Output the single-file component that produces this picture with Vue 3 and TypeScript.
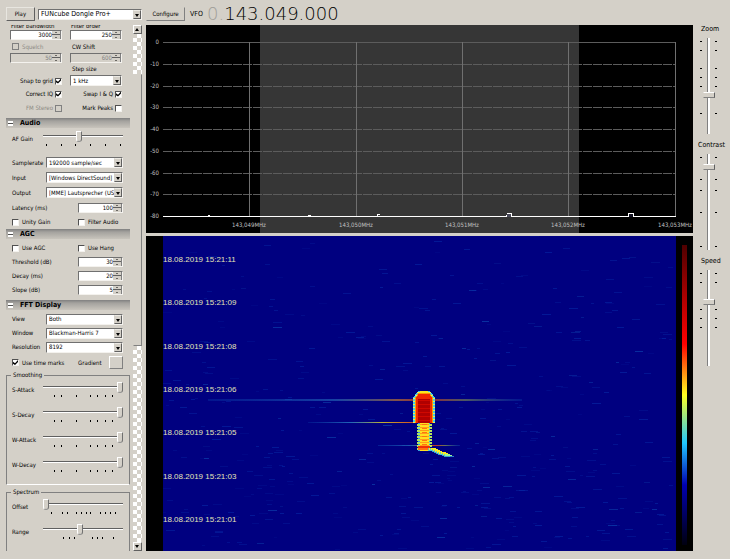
<script setup lang="ts">
import { ref } from 'vue'

interface Slider { id: string; label: string; value: number; ticks: number[] }
interface Choice { id: string; label: string; value: string }
interface Field { id: string; label: string; value: string }
interface Cell { x: number; y: number; w: number; h: number; fill: string; o: number }

const device = ref('FUNcube Dongle Pro+')
const step = ref('1 kHz')

const afGain: Slider = { id: 'af-gain', label: 'AF Gain', value: 45, ticks: [3, 18, 32, 47, 62, 77] }
const audioChoices: Choice[] = [
  { id: 'samplerate', label: 'Samplerate', value: '192000 sample/sec' },
  { id: 'input', label: 'Input', value: '[Windows DirectSound]' },
  { id: 'output', label: 'Output', value: '[MME] Lautsprecher (USB)' },
]
const agcFields: Field[] = [
  { id: 'threshold', label: 'Threshold (dB)', value: '30' },
  { id: 'decay', label: 'Decay (ms)', value: '20' },
  { id: 'slope', label: 'Slope (dB)', value: '5' },
]
const fftChoices: Choice[] = [
  { id: 'view', label: 'View', value: 'Both' },
  { id: 'window', label: 'Window', value: 'Blackman-Harris 7' },
  { id: 'resolution', label: 'Resolution', value: '8192' },
]
const smoothTicks = [11, 18, 33, 47, 54, 62, 69]
const smoothing: Slider[] = [
  { id: 's-attack', label: 'S-Attack', value: 100, ticks: smoothTicks },
  { id: 's-decay', label: 'S-Decay', value: 100, ticks: smoothTicks },
  { id: 'w-attack', label: 'W-Attack', value: 100, ticks: smoothTicks },
  { id: 'w-decay', label: 'W-Decay', value: 100, ticks: smoothTicks },
]
const spectrum: Slider[] = [
  { id: 'offset', label: 'Offset', value: 0, ticks: [8, 19, 24, 33, 38, 43, 47, 57, 62, 67, 72] },
  { id: 'range', label: 'Range', value: 46, ticks: [20, 26, 31, 49, 54, 59, 70] },
]
const bars: Slider[] = [
  { id: 'zoom', label: 'Zoom', value: 40, ticks: [3, 12, 30, 39, 48, 75] },
  { id: 'contrast', label: 'Contrast', value: 89, ticks: [3, 25, 36, 58, 92] },
  { id: 'speed', label: 'Speed', value: 68, ticks: [3, 12, 39, 48, 57] },
]

const levels = [0, -10, -20, -30, -40, -50, -60, -70, -80].map((v, i) => ({ v, y: Math.round(17 + i * 21.75) }))
const freqs = [
  { x: 103, t: '143,049MHz' }, { x: 210, t: '143,050MHz' }, { x: 316, t: '143,051MHz' },
  { x: 422, t: '143,052MHz' }, { x: 529, t: '143,053MHz' },
]
const stamps = ['11', '09', '08', '06', '05', '03', '01'].map((s, i) => ({ t: `18.08.2019 15:21:${s}`, y: Math.round(26 + i * 43.3) }))

let seed = 7
const rnd = (): number => {
  seed = (seed * 16807) % 2147483647
  return seed / 2147483647
}

// Faint background noise of the waterfall, slightly denser towards the bottom
const noise: Cell[] = []
for (let i = 0; i < 480; i++) {
  const w = 3 + Math.floor(rnd() * 7)
  noise.push({
    x: 17 + Math.floor(rnd() * (513 - w)), y: Math.floor(Math.pow(rnd(), 0.7) * 314), w, h: 1,
    fill: rnd() > 0.88 ? '#1468c8' : '#0838b4', o: 0.1 + rnd() * 0.35,
  })
}

// Meteor echo: strong head, striped trunk, fading tail
const echo: Cell[] = []
const put = (x: number, y: number, w: number, fill: string, o = 1, h = 1): void => {
  echo.push({ x, y, w, h, fill, o })
}
for (let y = 155; y < 187; y++) {
  const inset = Math.max(0, Math.floor((162 - y) / 1.4))
  const edge = y % 3 === 0 ? '#f4ff50' : '#48d8f0'
  put(267 + inset, y, 22 - inset * 2, edge, 0.95)
  put(269 + inset, y, 18 - inset * 2, y < 157 ? '#f8e820' : '#ff9800')
  if (y > 157) put(270 + inset, y, 16 - inset * 2, '#f02800')
  if (y > 162) put(272, y, 12, y % 4 === 0 ? '#d00800' : '#b00000')
}
for (let y = 187; y < 215; y++) {
  const k = y % 3
  put(271 + (k === 1 ? 1 : 0), y, k === 1 ? 12 : 15, k === 1 ? '#38b8e8' : '#c8ff58', 0.9)
  put(274, y, 9, k === 2 ? '#ff9c18' : '#ffe020')
  if (y % 4 === 0) put(276, y, 5, '#ff7410')
}
for (let y = 210; y < 214; y++) put(272, y, 12, y < 212 ? '#f03008' : '#ff7410')
for (let i = 0; i < 11; i++) {
  const y = 212 + Math.floor(i * 0.8)
  if (i < 9) put(282 + i * 2, y, 6, '#48c8e0', 0.8, 3)
  put(283 + i * 2, y, 5, i < 8 ? '#fff020' : i < 10 ? '#a0f890' : '#38b0e8', i > 9 ? 0.7 : 1, i < 9 ? 2 : 1)
}
</script>

<template>
  <div class="app">
    <header class="top">
      <button class="push play" type="button">Play</button>
      <span class="pick device">
        <select v-model="device" aria-label="Device"><option>FUNcube Dongle Pro+</option></select>
        <i class="drop"></i>
      </span>
      <button class="push configure" type="button">Configure</button>
      <span class="vfo">VFO</span>
      <span class="freq"><span class="dim">0.</span>143.049.000</span>
    </header>

    <aside class="side">
      <div class="panel">
        <section class="radio">
          <label class="cut" for="bw">Filter bandwidth</label>
          <label class="cut" for="order">Filter order</label>
          <span class="spin"><input id="bw" value="3000"><i class="arrows"></i></span>
          <span class="spin"><input id="order" value="250"><i class="arrows"></i></span>
          <label class="line muted"><input type="checkbox" disabled>Squelch</label>
          <label class="line" for="cw">CW Shift</label>
          <span class="spin off"><input id="sq" value="50" aria-label="Squelch level" disabled><i class="arrows"></i></span>
          <span class="spin off"><input id="cw" value="600" disabled><i class="arrows"></i></span>
          <label class="line stepname" for="step">Step size</label>
          <label class="line end">Snap to grid<input type="checkbox" checked></label>
          <span class="pick">
            <select id="step" v-model="step"><option>1 kHz</option></select>
            <i class="drop"></i>
          </span>
          <label class="line end">Correct IQ<input type="checkbox" checked></label>
          <label class="line end">Swap I &amp; Q<input type="checkbox" checked></label>
          <label class="line end muted">FM Stereo<input type="checkbox" disabled></label>
          <label class="line end">Mark Peaks<input type="checkbox"></label>
        </section>

        <h2><i class="fold"></i>Audio</h2>
        <section class="audio">
          <div class="slide first">
            <label :for="afGain.id">{{ afGain.label }}</label>
            <div class="rail">
              <input :id="afGain.id" type="range" :value="afGain.value">
              <svg viewBox="0 0 80 2"><rect v-for="t in afGain.ticks" :key="t" :x="t" y="0" width="1" height="2" /></svg>
            </div>
          </div>
          <div v-for="c in audioChoices" :key="c.id" class="row">
            <label :for="c.id">{{ c.label }}</label>
            <span class="pick"><select :id="c.id"><option>{{ c.value }}</option></select><i class="drop"></i></span>
          </div>
          <div class="row half">
            <label for="latency">Latency (ms)</label>
            <span class="spin"><input id="latency" value="100"><i class="arrows"></i></span>
          </div>
          <div class="row half">
            <label class="line"><input type="checkbox">Unity Gain</label>
            <label class="line"><input type="checkbox">Filter Audio</label>
          </div>
        </section>

        <h2><i class="fold"></i>AGC</h2>
        <section class="agc">
          <div class="row half">
            <label class="line"><input type="checkbox">Use AGC</label>
            <label class="line"><input type="checkbox">Use Hang</label>
          </div>
          <div v-for="f in agcFields" :key="f.id" class="row half">
            <label :for="f.id">{{ f.label }}</label>
            <span class="spin"><input :id="f.id" :value="f.value"><i class="arrows"></i></span>
          </div>
        </section>

        <h2><i class="fold"></i>FFT Display</h2>
        <section class="fft">
          <div v-for="c in fftChoices" :key="c.id" class="row">
            <label :for="c.id">{{ c.label }}</label>
            <span class="pick"><select :id="c.id"><option>{{ c.value }}</option></select><i class="drop"></i></span>
          </div>
          <div class="row half marks">
            <label class="line"><input type="checkbox" checked>Use time marks</label>
            <span class="grad"><label for="gradient">Gradient</label><button id="gradient" class="push swatch" type="button" aria-label="Gradient"></button></span>
          </div>
        </section>

        <fieldset>
          <legend>Smoothing</legend>
          <div v-for="s in smoothing" :key="s.id" class="slide">
            <label :for="s.id">{{ s.label }}</label>
            <div class="rail">
              <input :id="s.id" type="range" :value="s.value">
              <svg viewBox="0 0 80 2"><rect v-for="t in s.ticks" :key="t" :x="t" y="0" width="1" height="2" /></svg>
            </div>
          </div>
        </fieldset>
        <fieldset class="open">
          <legend>Spectrum</legend>
          <div v-for="s in spectrum" :key="s.id" class="slide">
            <label :for="s.id">{{ s.label }}</label>
            <div class="rail">
              <input :id="s.id" type="range" :value="s.value">
              <svg viewBox="0 0 80 2"><rect v-for="t in s.ticks" :key="t" :x="t" y="0" width="1" height="2" /></svg>
            </div>
          </div>
        </fieldset>
      </div>
      <div class="scroll">
        <i class="nudge up"></i>
        <i class="gap"></i>
        <i class="thumb"></i>
        <i class="gap rest"></i>
        <i class="nudge down"></i>
      </div>
    </aside>

    <main class="views">
      <svg class="plot" viewBox="0 0 547 208" shape-rendering="crispEdges">
        <rect width="547" height="208" fill="#000" />
        <rect x="114" width="319" height="208" fill="#363636" />
        <g stroke="#5c5c5c">
          <line v-for="l in levels" :key="l.v" x1="17" x2="530" :y1="l.y + 0.5" :y2="l.y + 0.5" :stroke-dasharray="l.v ? '9 1' : undefined" />
          <line v-for="f in freqs" :key="f.x" :x1="f.x + 0.5" :x2="f.x + 0.5" y1="17" y2="191" stroke="#707070" />
        </g>
        <line x1="17" x2="530" y1="191.5" y2="191.5" stroke="#fff" />
        <g fill="none" stroke="#fff">
          <path d="M62 190.500h2M162 190.500h3M231.500 191v-2h2M360 190.500h1v-2h4v3M482.500 191v-3h5v3" />
        </g>
        <rect x="483" y="189" width="4" height="3" fill="#101020" />
        <rect x="361" y="189" width="4" height="3" fill="#484858" />
        <g class="scale" fill="#c0c0c0">
          <text v-for="l in levels" :key="l.v" x="13" :y="l.y + 2" text-anchor="end">{{ l.v }}</text>
          <text v-for="f in freqs" :key="f.x" :x="f.x" y="202" text-anchor="middle">{{ f.t }}</text>
        </g>
      </svg>

      <svg class="fall" viewBox="0 0 547 315" shape-rendering="crispEdges">
        <defs>
          <linearGradient id="heat" x1="0" y1="0" x2="0" y2="1">
            <stop offset="0" stop-color="#500000" />
            <stop offset="0.33" stop-color="#f00" />
            <stop offset="0.5" stop-color="#ffff20" />
            <stop offset="0.66" stop-color="#20c8ff" />
            <stop offset="0.8" stop-color="#0000b0" />
            <stop offset="1" stop-color="#000010" />
          </linearGradient>
          <linearGradient id="trace" x1="0" y1="0" x2="1" y2="0">
            <stop offset="0" stop-color="#1060c0" stop-opacity="0.3" />
            <stop offset="0.4" stop-color="#3090d0" stop-opacity="0.6" />
            <stop offset="0.6" stop-color="#c07830" stop-opacity="0.9" />
            <stop offset="0.7" stop-color="#c03020" />
            <stop offset="0.82" stop-color="#809050" stop-opacity="0.8" />
            <stop offset="1" stop-color="#1060c0" stop-opacity="0.3" />
          </linearGradient>
          <linearGradient id="streak" x1="0" y1="0" x2="1" y2="0">
            <stop offset="0" stop-color="#1060c0" stop-opacity="0.2" />
            <stop offset="0.4" stop-color="#3090d0" stop-opacity="0.7" />
            <stop offset="0.7" stop-color="#c0b030" />
            <stop offset="1" stop-color="#d05020" />
          </linearGradient>
        </defs>
        <rect width="547" height="315" fill="#000" />
        <rect x="17" width="513" height="315" fill="#000080" />
        <rect v-for="(n, i) in noise" :key="i" :x="n.x" :y="n.y" :width="n.w" :height="n.h" :fill="n.fill" :opacity="n.o" />
        <rect x="62" y="163" width="314" height="2" fill="url(#trace)" opacity="0.75" />
        <rect x="162" y="186" width="106" height="1" fill="url(#streak)" />
        <rect x="232" y="209" width="82" height="1" fill="url(#trace)" />
        <rect v-for="(c, i) in echo" :key="'e' + i" :x="c.x" :y="c.y" :width="c.w" :height="c.h" :fill="c.fill" :opacity="c.o" />
        <rect x="536" y="9" width="5" height="300" fill="url(#heat)" />
        <g class="stamp">
          <text v-for="s in stamps" :key="s.t" x="17" :y="s.y">{{ s.t }}</text>
        </g>
      </svg>
    </main>

    <aside class="bars">
      <div v-for="b in bars" :key="b.id" class="bar">
        <label :for="b.id">{{ b.label }}</label>
        <div class="column">
          <svg viewBox="0 0 2 96"><rect v-for="t in b.ticks" :key="t" x="0" :y="t" width="2" height="1" /></svg>
          <input :id="b.id" type="range" :value="b.value">
          <svg viewBox="0 0 2 96"><rect v-for="t in b.ticks" :key="t" x="0" :y="t" width="2" height="1" /></svg>
        </div>
      </div>
    </aside>
  </div>
</template>

<style>
body { background: #d4d0c8; }
</style>

<style scoped>
.app {
  display: grid;
  grid-template-columns: 146px 1fr 37px;
  grid-template-rows: 25px auto;
  padding-bottom: 8px;
  background: #d4d0c8;
  color: #000;
  font: 6px/8px "DejaVu Sans Condensed", "Liberation Sans", sans-serif;
  white-space: nowrap;
}
.app * { box-sizing: border-box; }
input, select, button { font: inherit; color: inherit; margin: 0; padding: 0; border-radius: 0; outline: 0; }
i { display: block; font-style: normal; }
svg { display: block; }

.top {
  grid-column: 1 / -1;
  display: flex;
  align-items: center;
  padding: 3px 0 0 6px;
}
.push {
  background: #d4d0c8;
  border: 1px solid;
  border-color: #fff #808080 #808080 #fff;
}
.play { width: 29px; height: 14px; margin-right: 3px; border-color: #e8e6e0 #606060 #606060 #e8e6e0; }
.configure { width: 39px; height: 14px; margin: 0 5px 0 4px; border-color: #d4d0c8 #808080 #808080 #d4d0c8; }
.device { width: 104px; font-size: 7px; }
.vfo { width: 17px; font-size: 7px; }
.freq { font: 200 18px/18px "DejaVu Sans Light", "DejaVu Sans", sans-serif; }
.dim { color: #a09e98; }

.side { display: grid; grid-template-columns: 124px 9px; gap: 3px; padding: 0 4px 0 6px; }
.panel { overflow: hidden; }
.pick, .spin {
  display: flex;
  height: 11px;
  min-width: 0;
  background: #fff;
  border: 1px solid;
  border-color: #707070 #f4f2ee #f4f2ee #707070;
}
.pick select {
  flex: 1;
  min-width: 0;
  appearance: none;
  border: 0;
  padding-left: 2px;
  background: #fff;
  overflow: hidden;
}
.drop { width: 8px; background: #d4d0c8; border: 1px solid; border-color: #eceae4 #606060 #606060 #d4d0c8; }
.drop::before { content: ""; display: block; margin: 3px 1px; border: solid transparent; border-width: 3px 2px 0; border-top-color: #000; }
.spin { height: 10px; }
.spin input { flex: 1; width: 0; border: 0; background: #fff; text-align: right; }
.spin.off, .spin.off input { background: #d4d0c8; color: #808080; }
.arrows {
  width: 9px;
  background: linear-gradient(#d4d0c8 3px, #606060 3px, #606060 4px, #d4d0c8 4px);
  border-right: 1px solid #808080;
  padding: 1px 3px;
}
.arrows::before, .arrows::after { content: ""; display: block; border: solid transparent; border-width: 0 1px 1px; border-bottom-color: #000; }
.arrows::after { margin-top: 4px; border-width: 1px 1px 0; border-top-color: #000; }

.line { display: flex; align-items: center; gap: 3px; }
.line.end { justify-content: flex-end; gap: 2px; }
.muted { color: #8c8a84; }
input[type="checkbox"] {
  appearance: none;
  width: 7px;
  height: 7px;
  background: #fff;
  border: 1px solid;
  border-color: #505050 #f4f2ee #f4f2ee #505050;
}
input[type="checkbox"]:disabled { background: #d4d0c8; border-color: #808080; }
input[type="checkbox"]:checked::before {
  content: "";
  display: block;
  width: 5px;
  height: 5px;
  background: #000;
  clip-path: polygon(0 35%, 40% 65%, 100% 0, 100% 40%, 40% 100%, 0 75%);
}

.radio {
  display: grid;
  grid-template-columns: 52px 52px;
  grid-template-rows: 5px 10px 13px 10px 12px 12px 14px 14px;
  gap: 0 8px;
  padding: 0 0 3px 4px;
}
.cut { display: flex; align-items: flex-end; overflow: hidden; padding-left: 1px; }
.stepname { grid-column: 2; }
.radio .line:not(.end) { padding-left: 2px; }

h2 {
  display: flex;
  align-items: center;
  gap: 7px;
  height: 10px;
  margin: 0;
  padding-left: 2px;
  font-size: 7px;
  font-weight: 700;
  background: linear-gradient(#808080, #a4a29e 30%, #c8c4bc);
}
.fold { width: 5px; height: 5px; background: linear-gradient(#fff 2px, #505050 2px, #505050 3px, #fff 3px); }

.row { display: grid; grid-template-columns: 34px 77px; align-items: center; height: 14px; padding-left: 6px; }
.row.half { grid-template-columns: 66px 45px; }
.audio .row { height: 15px; }
.agc { padding: 2px 0 3px; }
.fft { padding-top: 2px; }
.fft .marks { height: 17px; }
.grad { display: flex; align-items: center; justify-content: space-between; }
.swatch { width: 14px; height: 13px; }

.slide { display: grid; grid-template-columns: 31px 80px; height: 25px; padding-left: 6px; }
.slide label { line-height: 18px; }
.slide.first { height: 27px; padding-top: 2px; }
.slide.first ~ .row:last-child { height: 14px; }
.rail input { display: block; width: 100%; height: 12px; appearance: none; background: linear-gradient(transparent 5px, #606060 5px, #606060 6px, #fff 6px, #fff 7px, transparent 7px); }
.rail svg { width: 100%; margin-top: 2px; }
.rail input::-webkit-slider-thumb {
  appearance: none;
  width: 6px;
  height: 11px;
  background: #d4d0c8;
  border: 1px solid;
  border-color: #fff #707070 #909090 #fff;
  border-radius: 0 0 3px 3px;
}

fieldset { margin: 0; padding: 2px 0 3px; border: 1px solid; border-color: #808080 #808080 #fff #808080; min-width: 0; }
fieldset legend { margin-left: 4px; padding: 0 2px; line-height: 8px; }
fieldset .slide { padding-left: 5px; }
fieldset.open { margin-top: 3px; border-bottom: 0; }

.scroll { display: flex; flex-direction: column; background: #d4d0c8; }
.nudge { height: 9px; border: 1px solid; border-color: #fff #606060 #606060 #fff; padding: 2px 1px; }
.nudge::before { content: ""; display: block; width: 0; border: solid transparent; border-width: 0 2px 3px; border-bottom-color: #000; }
.nudge.down::before { border-width: 3px 2px 0; border-top-color: #000; }
.gap { height: 40px; background: repeating-conic-gradient(#fff 0 25%, #d4d0c8 0 50%) 0 0 / 8px 8px; }
.thumb { height: 272px; border: 1px solid; border-color: #d4d0c8 #808080 #808080 #d4d0c8; }
.gap.rest { flex: 1; }

.views { display: flex; flex-direction: column; gap: 3px; min-width: 0; }
.plot, .fall { width: 100%; height: auto; }
.scale { font-size: 6px; }
.stamp { font: 8px "Liberation Sans", sans-serif; fill: #e4e4b8; }

.bars { display: flex; flex-direction: column; gap: 7px; }
.bar label { display: block; height: 13px; line-height: 8px; padding-left: 8px; font-size: 7px; }
.bar:nth-child(2) label { padding-left: 5px; }
.column { display: grid; grid-template-columns: 2px 13px 2px; padding-left: 7px; height: 96px; }
.column input {
  appearance: none;
  writing-mode: vertical-lr;
  direction: rtl;
  width: 13px;
  height: 96px;
  background: linear-gradient(90deg, transparent 5px, #808080 5px, #808080 6px, #fff 6px, #fff 8px, transparent 8px);
}
.column input::-webkit-slider-thumb {
  appearance: none;
  width: 12px;
  height: 6px;
  background: #d4d0c8;
  border: 1px solid;
  border-color: #fff #606060 #808080 #d4d0c8;
}
</style>
